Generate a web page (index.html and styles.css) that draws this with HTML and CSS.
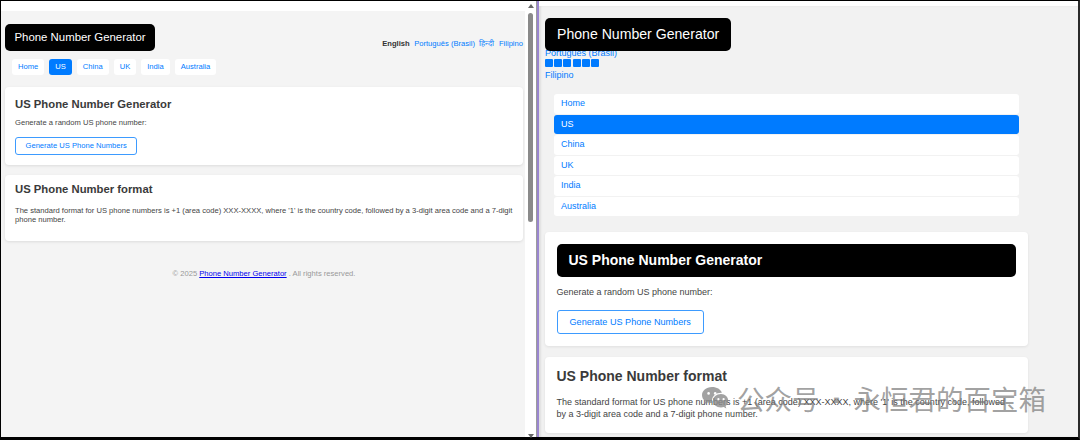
FILE: index.html
```html
<!DOCTYPE html>
<html lang="en">
<head>
  <meta charset="UTF-8" />
  <meta name="viewport" content="width=device-width, initial-scale=1" />
  <title>Phone Number Generator</title>
  <link rel="stylesheet" href="styles.css">
</head>
<body>
  <div class="frame">
    <!-- desktop window -->
    <section class="window desktop">
      <div class="viewport">
        <header class="site-header">
          <div class="logo">Phone Number Generator</div>
          <nav class="langs">
            <span class="current">English</span>
            <a href="#">Português (Brasil)</a>
            <a href="#">हिन्दी</a>
            <a href="#">Filipino</a>
          </nav>
        </header>
        <nav class="menu">
          <a href="#">Home</a>
          <a href="#" class="active">US</a>
          <a href="#">China</a>
          <a href="#">UK</a>
          <a href="#">India</a>
          <a href="#">Australia</a>
        </nav>
        <div class="card card-gen">
          <h2 class="card-title">US Phone Number Generator</h2>
          <p class="card-text">Generate a random US phone number:</p>
          <button class="btn">Generate US Phone Numbers</button>
        </div>
        <div class="card card-format">
          <h2 class="card-title">US Phone Number format</h2>
          <p class="card-text">The standard format for US phone numbers is +1 (area code) XXX-XXXX, where '1' is the country code, followed by a 3-digit area code and a 7-digit phone number.</p>
        </div>
        <footer class="footer">© 2025 <a href="#">Phone Number Generator</a> . All rights reserved.</footer>
      </div>
      <div class="scrollbar">
        <span class="arrow up"></span>
        <span class="thumb"></span>
        <span class="arrow down"></span>
      </div>
    </section>

    <div class="divider"></div>

    <!-- mobile window -->
    <section class="window mobile">
      <div class="m-page">
        <header class="m-header">
          <div class="logo">Phone Number Generator</div>
          <nav class="m-langs">
            <span class="current">English</span>
            <a href="#">Português (Brasil)</a>
            <a href="#" class="tofu" aria-label="हिन्दी"><i></i><i></i><i></i><i></i><i></i><i></i></a>
            <a href="#">Filipino</a>
          </nav>
        </header>
        <nav class="m-menu">
          <a href="#">Home</a>
          <a href="#" class="active">US</a>
          <a href="#">China</a>
          <a href="#">UK</a>
          <a href="#">India</a>
          <a href="#">Australia</a>
        </nav>
        <div class="m-card m-gen">
          <h2 class="m-heading">US Phone Number Generator</h2>
          <p class="m-text">Generate a random US phone number:</p>
          <button class="m-btn">Generate US Phone Numbers</button>
        </div>
        <div class="m-card m-format">
          <h2 class="m-title">US Phone Number format</h2>
          <p class="m-text">The standard format for US phone numbers is +1 (area code) XXX-XXXX, where '1' is the country code, followed by a 3-digit area code and a 7-digit phone number.</p>
        </div>
      </div>
    </section>

    <div class="watermark">
      <svg class="wx" width="28" height="26" viewBox="0 0 28 26" aria-hidden="true">
        <path d="M11 1C5 1 1 4.8 1 9.2c0 2.5 1.3 4.6 3.4 6.1L3.6 18l3.1-1.6c1.3.4 2.7.6 4.1.6h.6c-.3-.8-.4-1.6-.4-2.4 0-4.4 4.1-7.9 9.3-7.9h.6C19.8 3.4 15.8 1 11 1z" fill="#8c8c8c"/>
        <circle cx="7.6" cy="7.4" r="1.3" fill="#fff"/>
        <circle cx="14.2" cy="7.4" r="1.3" fill="#fff"/>
        <path d="M20 8c-4.6 0-8 3-8 6.7s3.4 6.7 8 6.7c1 0 1.9-.1 2.8-.4l2.5 1.4-.7-2.3c1.7-1.3 2.6-3.2 2.6-5.4C27.2 11 24.2 8 20 8z" fill="#8c8c8c"/>
        <circle cx="17.4" cy="13.2" r="1.1" fill="#fff"/>
        <circle cx="22.6" cy="13.2" r="1.1" fill="#fff"/>
      </svg>
      <span class="wm-text">公众号<span class="wm-dot">·</span>永恒君的百宝箱</span>
    </div>
  </div>
</body>
</html>
```

FILE: styles.css
```css
/* base */
* {
  box-sizing: border-box;
}
html,
body {
  margin: 0;
}
body {
  width: 1080px;
  height: 440px;
  overflow: hidden;
  background: #fff;
  font-family: "Liberation Sans", Arial, sans-serif;
  color: #333;
}
a {
  text-decoration: none;
  color: #007bff;
}

.frame {
  position: relative;
  display: flex;
  height: 440px;
  border-top: 1px solid #000;
  border-left: 1px solid #000;
  border-bottom: 3px solid #000;
  border-right: 2px solid #2a2a2a;
}

/* desktop window */
.desktop {
  width: 536px;
  display: flex;
  border-right: 1px solid #9c9c9c;
}
.viewport {
  width: 524px;
  background: #f4f4f4;
  border-top: 10px solid #fff;
  padding: 13px 2px 0 4px;
}
.site-header {
  display: flex;
  justify-content: space-between;
  align-items: flex-end;
}
.logo {
  background: #000;
  color: #fff;
  font-size: 11.4px;
  height: 27px;
  line-height: 27px;
  padding: 0 9.5px;
  border-radius: 5px;
}
.langs {
  display: flex;
  gap: 4.5px;
  font-size: 7.6px;
  line-height: 9px;
  padding-bottom: 3.5px;
}
.langs .current {
  font-weight: 700;
  color: #333;
}
.menu {
  display: flex;
  gap: 5px;
  margin: 8px 0 0 7px;
}
.menu a {
  background: #fff;
  font-size: 7.6px;
  line-height: 16px;
  padding: 0 6px;
  border-radius: 3px;
}
.menu a.active,
.m-menu a.active {
  background: #007bff;
  color: #fff;
}
.card {
  background: #fff;
  border-radius: 4px;
  box-shadow: 0 1px 3px rgba(0, 0, 0, 0.1);
  padding: 10.5px 8px 9.7px 10px;
  margin-top: 12px;
}
.card-format {
  margin-top: 10px;
  padding-top: 8.5px;
  padding-bottom: 16.7px;
}
.card-title {
  margin: 0;
  font-size: 11.3px;
  line-height: 13px;
  color: #3a3a3a;
}
.card-text {
  margin: 7.7px 0 0;
  font-size: 7.6px;
  line-height: 9px;
  color: #444;
}
.card-format .card-text {
  margin-top: 11px;
  line-height: 8.4px;
}
.btn {
  display: block;
  margin-top: 9.5px;
  height: 18.6px;
  padding: 0 9.5px;
  font-family: inherit;
  font-size: 7.6px;
  color: #007bff;
  background: #fff;
  border: 1px solid #3d9bff;
  border-radius: 3px;
}
.footer {
  margin-top: 28.5px;
  text-align: center;
  font-size: 7.6px;
  line-height: 9px;
  color: #999;
}
.footer a {
  color: #0000ee;
  text-decoration: underline;
}

/* fake scrollbar */
.scrollbar {
  width: 11px;
  background: #fff;
  display: flex;
  flex-direction: column;
  align-items: center;
}
.arrow {
  width: 0;
  height: 0;
  border-left: 3px solid transparent;
  border-right: 3px solid transparent;
}
.arrow.up {
  margin-top: 3px;
  border-bottom: 4px solid #666;
}
.arrow.down {
  margin-top: auto;
  margin-bottom: -1px;
  border-top: 4px solid #666;
}
.thumb {
  margin-top: 5px;
  width: 5px;
  height: 209px;
  background: #8a8a8a;
  border-radius: 3px;
}

.divider {
  width: 2px;
  background: #9a86d0;
}

/* mobile window */
.mobile {
  flex: 1;
  background: #f2f2f2;
  border-top: 5px solid #fff;
  padding: 12px 0 0 6px;
  box-shadow: inset 2px 0 2px rgba(0, 0, 0, 0.08);
  overflow: hidden;
}
.m-page {
  width: 483px;
}
.m-header {
  display: flex;
  flex-direction: column;
  align-items: flex-start;
}
.m-header .logo {
  position: relative;
  z-index: 1;
  font-size: 14.1px;
  height: 33.4px;
  line-height: 33.4px;
  padding: 0 12px;
}
.m-langs {
  display: flex;
  flex-direction: column;
  align-items: flex-start;
  margin-top: -14.2px;
  font-size: 9px;
  line-height: 11px;
}
.m-langs .current {
  font-weight: 700;
  color: #333;
}
.tofu {
  display: flex;
  gap: 1.2px;
  height: 11px;
}
.tofu i {
  width: 8px;
  height: 7.4px;
  background: #007bff;
  border-radius: 1px;
}
.m-menu {
  display: flex;
  flex-direction: column;
  gap: 1px;
  margin: 12.8px 9px 0;
}
.m-menu a {
  background: #fff;
  height: 19.5px;
  line-height: 19.5px;
  padding-left: 7px;
  font-size: 9px;
  border-radius: 3px;
}
.m-card {
  background: #fff;
  border-radius: 4px;
  box-shadow: 0 1px 3px rgba(0, 0, 0, 0.08);
  padding: 11.6px 12px 12px 11.5px;
  margin-top: 16.4px;
}
.m-format {
  margin-top: 11.3px;
  padding-top: 11.4px;
}
.m-heading {
  margin: 0;
  background: #000;
  color: #fff;
  font-size: 14px;
  height: 33px;
  line-height: 33px;
  padding: 0 12px;
  border-radius: 5px;
}
.m-title {
  margin: 0;
  font-size: 14px;
  line-height: 16px;
  color: #3a3a3a;
}
.m-text {
  margin: 10px 0 0;
  font-size: 9px;
  line-height: 11px;
  color: #444;
}
.m-format .m-text {
  margin-top: 12.8px;
  line-height: 11.7px;
}
.m-btn {
  display: block;
  margin-top: 11.8px;
  height: 24px;
  padding: 0 12px;
  font-family: inherit;
  font-size: 9.1px;
  color: #007bff;
  background: #fff;
  border: 1px solid #3d9bff;
  border-radius: 3px;
}

/* watermark over the screenshot */
.watermark {
  position: absolute;
  left: 700px;
  top: 381px;
  display: flex;
  align-items: center;
  gap: 8px;
  font-family: "Noto Sans CJK SC", sans-serif;
  font-size: 27.5px;
  line-height: 32px;
  color: rgba(120, 120, 120, 0.7);
}
.wm-dot {
  display: inline-block;
  width: 34px;
  text-align: center;
  font-family: "DejaVu Sans", sans-serif;
  font-weight: 700;
}
.wx {
  opacity: 0.8;
}
```
